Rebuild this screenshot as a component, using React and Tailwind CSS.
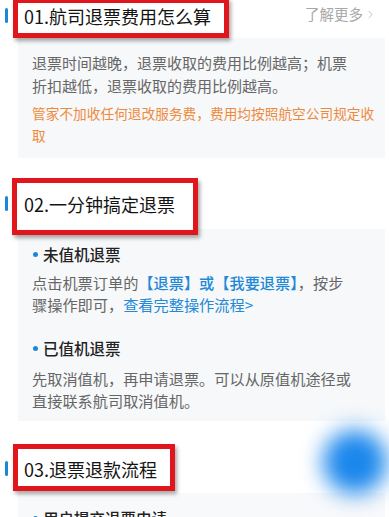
import { ChevronRight } from 'lucide-react'

const font = "font-['Noto_Sans_CJK_SC','Noto_Sans',sans-serif]"

function RedBox({ className }) {
  return (
    <div
      className={
        'pointer-events-none absolute border-[5px] border-[#e1161d] shadow-[2px_3px_4px_rgba(0,0,0,0.35)] ' +
        className
      }
    />
  )
}

function Bullet({ children }) {
  return (
    <div className="flex items-center text-[15.5px] leading-[24px] font-medium text-[#222]">
      <span className="ml-[1px] mr-[5px] h-[5px] w-[5px] rounded-full bg-[#1f87d9]" />
      {children}
    </div>
  )
}

function App() {
  return (
    <div className={`relative h-[517px] w-[389px] overflow-hidden bg-white ${font}`}>
      {/* section 1 */}
      <div className="relative flex h-[38px] items-start pt-[4px]">
        <div className="ml-[5px] mt-[4px] h-[15px] w-[3px] rounded-full bg-[#1a88d8]" />
        <div className="ml-[16px] whitespace-nowrap text-[18px] leading-[24px] text-[#141414]">
          01.航司退票费用怎么算
        </div>
        <div className="ml-auto mr-[12px] mt-[-2px] flex items-center text-[14.5px] leading-[24px] text-[#a8a8a8]">
          了解更多
          <ChevronRight size={13} strokeWidth={1.3} className="ml-[1px]" />
        </div>
        <RedBox className="left-[13px] top-[-2px] h-[40px] w-[216px]" />
      </div>

      <div className="ml-[18px] mr-[4px] bg-[#f6f8fa] pl-[14px] pt-[13px] pb-[12px]">
        <p className="whitespace-nowrap text-[15px] leading-[23px] text-[#666]">
          退票时间越晚，退票收取的费用比例越高；机票
          <br />
          折扣越低，退票收取的费用比例越高。
        </p>
        <p className="mt-[5px] whitespace-nowrap text-[13.7px] leading-[22px] text-[#ef8a3d]">
          管家不加收任何退改服务费，费用均按照航空公司规定收
          <br />
          取
        </p>
      </div>

      {/* section 2 */}
      <div className="relative flex h-[71px] items-start pt-[34px]">
        <div className="ml-[5px] mt-[4px] h-[15px] w-[3px] rounded-full bg-[#1a88d8]" />
        <div className="ml-[16px] whitespace-nowrap text-[18px] leading-[24px] text-[#141414]">
          02.一分钟搞定退票
        </div>
        <RedBox className="left-[12px] top-[20px] h-[57px] w-[186px]" />
      </div>

      <div className="ml-[18px] mr-[4px] bg-[#f6f8fa] pl-[14px] pt-[13px] pb-[10px]">
        <Bullet>未值机退票</Bullet>
        <p className="mt-[5px] whitespace-nowrap text-[15.2px] leading-[22px] text-[#666]">
          点击机票订单的
          <span className="font-medium text-[#2189d6]">【退票】或【我要退票】</span>，按步
          <br />
          骤操作即可，<span className="text-[#2189d6]">查看完整操作流程&gt;</span>
        </p>
        <div className="mt-[21px]">
          <Bullet>已值机退票</Bullet>
        </div>
        <p className="mt-[7px] whitespace-nowrap text-[15.2px] leading-[22px] text-[#666]">
          先取消值机，再申请退票。可以从原值机途径或
          <br />
          直接联系航司取消值机。
        </p>
      </div>

      {/* section 3 */}
      <div className="relative flex h-[72px] items-start pt-[36px]">
        <div className="ml-[5px] mt-[4px] h-[15px] w-[3px] rounded-full bg-[#1a88d8]" />
        <div className="ml-[16px] whitespace-nowrap text-[18px] leading-[24px] text-[#141414]">
          03.退票退款流程
        </div>
        <RedBox className="left-[13px] top-[23px] h-[47px] w-[162px]" />
      </div>

      <div className="ml-[18px] mr-[4px] bg-[#f8f9fb] pl-[14px] pt-[13px]">
        <div className="text-[#444]">
          <Bullet>用户提交退票申请</Bullet>
        </div>
      </div>

      {/* floating blurred button */}
      <div className="absolute left-[323px] top-[430px] h-[64px] w-[64px] rounded-full bg-[#1a86ec] blur-[11px]" />
    </div>
  )
}

export default App
